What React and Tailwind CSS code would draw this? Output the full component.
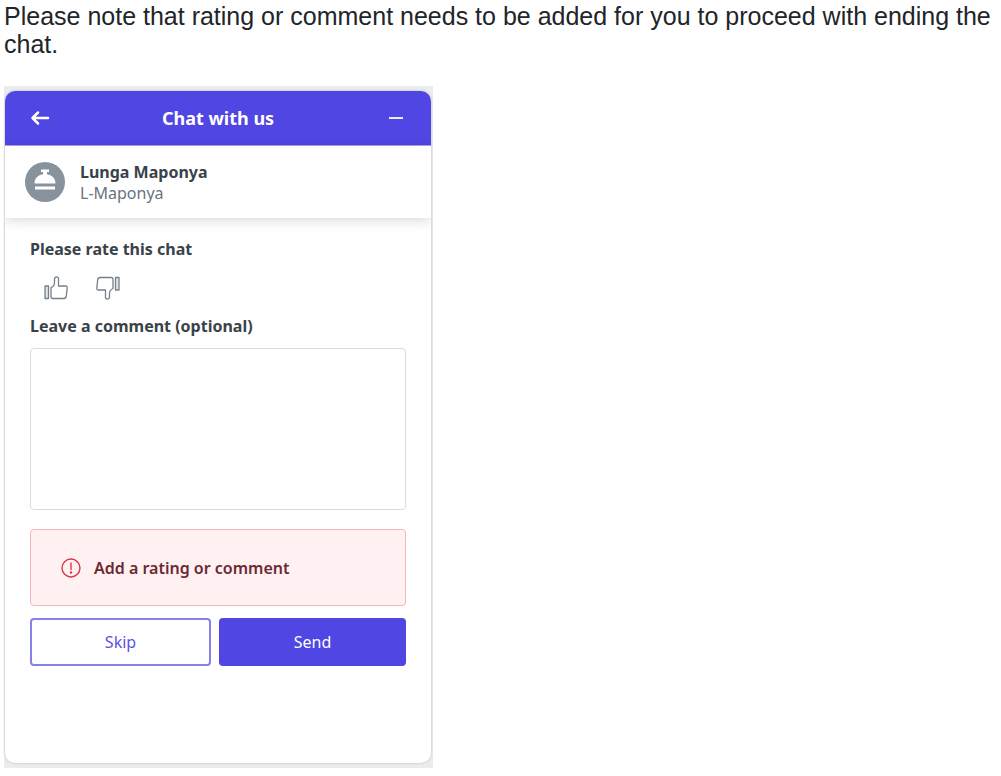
import React from 'react';

function BackIcon() {
  return (
    <svg viewBox="0 0 20 16" className="h-4 w-5" fill="none" stroke="currentColor" strokeWidth="2.5" strokeLinecap="round" strokeLinejoin="round" aria-hidden="true">
      <path d="M18 8H2.500M8 2.500 2.500 8 8 13.500" />
    </svg>
  );
}

function BellIcon() {
  return (
    <svg viewBox="0 0 40 40" className="size-10 shrink-0" aria-hidden="true">
      <circle cx="20" cy="20" r="20" fill="#87929d" />
      <path d="M16 7.500h8v2.500h-2v2.200c5 .8 8.500 4.300 8.500 9.300H9.500c0-5 3.500-8.500 8.500-9.300V10h-2z" fill="#fff" />
      <path d="M10 24.500h20v3H10z" fill="#fff" />
    </svg>
  );
}

function ThumbIcon({ down }) {
  return (
    <svg viewBox="0 0 24 24" className={down ? 'size-6 rotate-180' : 'size-6'} fill="none" stroke="#74808a" strokeWidth="1.300" strokeLinejoin="round" aria-hidden="true">
      <path d="M1 10h3.500v12.500H1z" fill="#e1e4e6" />
      <path d="M7 11.500c2.500-1 3.500-2.500 3.500-5V3c0-2.800 4-2.800 4 0v7h7c1.200 0 1.800.6 1.700 1.600l-.9 8.600c-.2 1.500-.9 2.300-2.300 2.300H9c-1.300 0-2-.7-2-2z" />
    </svg>
  );
}

function AlertIcon() {
  return (
    <svg viewBox="0 0 20 20" className="size-5 shrink-0" fill="none" stroke="#d43a4b" strokeWidth="1.400" strokeLinecap="round" aria-hidden="true">
      <circle cx="10" cy="10" r="9" />
      <path d="M10 5v6.500" />
      <circle cx="10" cy="14.500" r="1.200" fill="#d43a4b" stroke="none" />
    </svg>
  );
}

function ChatHeader() {
  return (
    <header className="flex h-[55px] items-center justify-between border-b border-[#aaa5f2] bg-[#5046e4] px-[23px] text-white">
      <button type="button" aria-label="Back" className="flex w-6 justify-center">
        <BackIcon />
      </button>
      <h1 className="text-lg font-bold">Chat with us</h1>
      <button type="button" aria-label="Minimize" className="flex w-6 justify-center">
        <span className="h-0.5 w-3.5 bg-white/90" />
      </button>
    </header>
  );
}

function AgentBar() {
  return (
    <div className="relative flex h-[72px] items-center gap-[15px] bg-white px-5 shadow-[0_2px_12px_rgba(0,0,0,0.16)]">
      <BellIcon />
      <div className="pt-0.5">
        <p className="text-base leading-[21px] font-bold text-[#394249]">Lunga Maponya</p>
        <p className="text-base leading-[21px] text-[#68737d]">L-Maponya</p>
      </div>
    </div>
  );
}

function RatingForm() {
  return (
    <form className="flex flex-col px-[25px] pt-[19px] pb-[97px]" onSubmit={(e) => e.preventDefault()}>
      <fieldset>
        <legend className="text-base font-bold text-[#394249]">Please rate this chat</legend>
        <div className="flex gap-7 px-3.5 pt-[15px] pb-3.5">
          <button type="button" aria-label="Good">
            <ThumbIcon />
          </button>
          <button type="button" aria-label="Bad">
            <ThumbIcon down />
          </button>
        </div>
      </fieldset>

      <label htmlFor="comment" className="text-base font-bold text-[#394249]">
        Leave a comment (optional)
      </label>
      <textarea id="comment" className="mt-2.5 h-[162px] w-full resize-none rounded border border-[#d8dcde] p-3 text-base" />

      <div role="alert" className="mt-[19px] flex h-[77px] items-center gap-[13px] rounded border border-[#f5b5ba] bg-[#fff0f1] px-[30px]">
        <AlertIcon />
        <p className="text-base font-semibold text-[#6b2a33]">Add a rating or comment</p>
      </div>

      <div className="mt-3 flex gap-2">
        <button type="button" className="h-12 w-[181px] rounded border-2 border-[#8580eb] text-base text-[#5b52e5]">
          Skip
        </button>
        <button type="submit" className="h-12 flex-1 rounded bg-[#5046e4] text-base text-white">
          Send
        </button>
      </div>
    </form>
  );
}

export default function App() {
  return (
    <main className="bg-white pt-0.5 pl-1">
      <p className="font-['Liberation_Sans',Arial,sans-serif] text-[25px] leading-7 text-[#212529]">
        Please note that rating or comment needs to be added for you to proceed with ending the chat.
      </p>

      <div className="mt-7 w-full max-w-[429px] bg-[#ebecee] pt-[5px] pr-0.5 pb-[5px] pl-px font-['Noto_Sans',sans-serif]">
        <section className="overflow-hidden rounded-[10px] bg-white shadow-[0_0_3px_rgba(0,0,0,0.2)]">
          <ChatHeader />
          <AgentBar />
          <RatingForm />
        </section>
      </div>
    </main>
  );
}
